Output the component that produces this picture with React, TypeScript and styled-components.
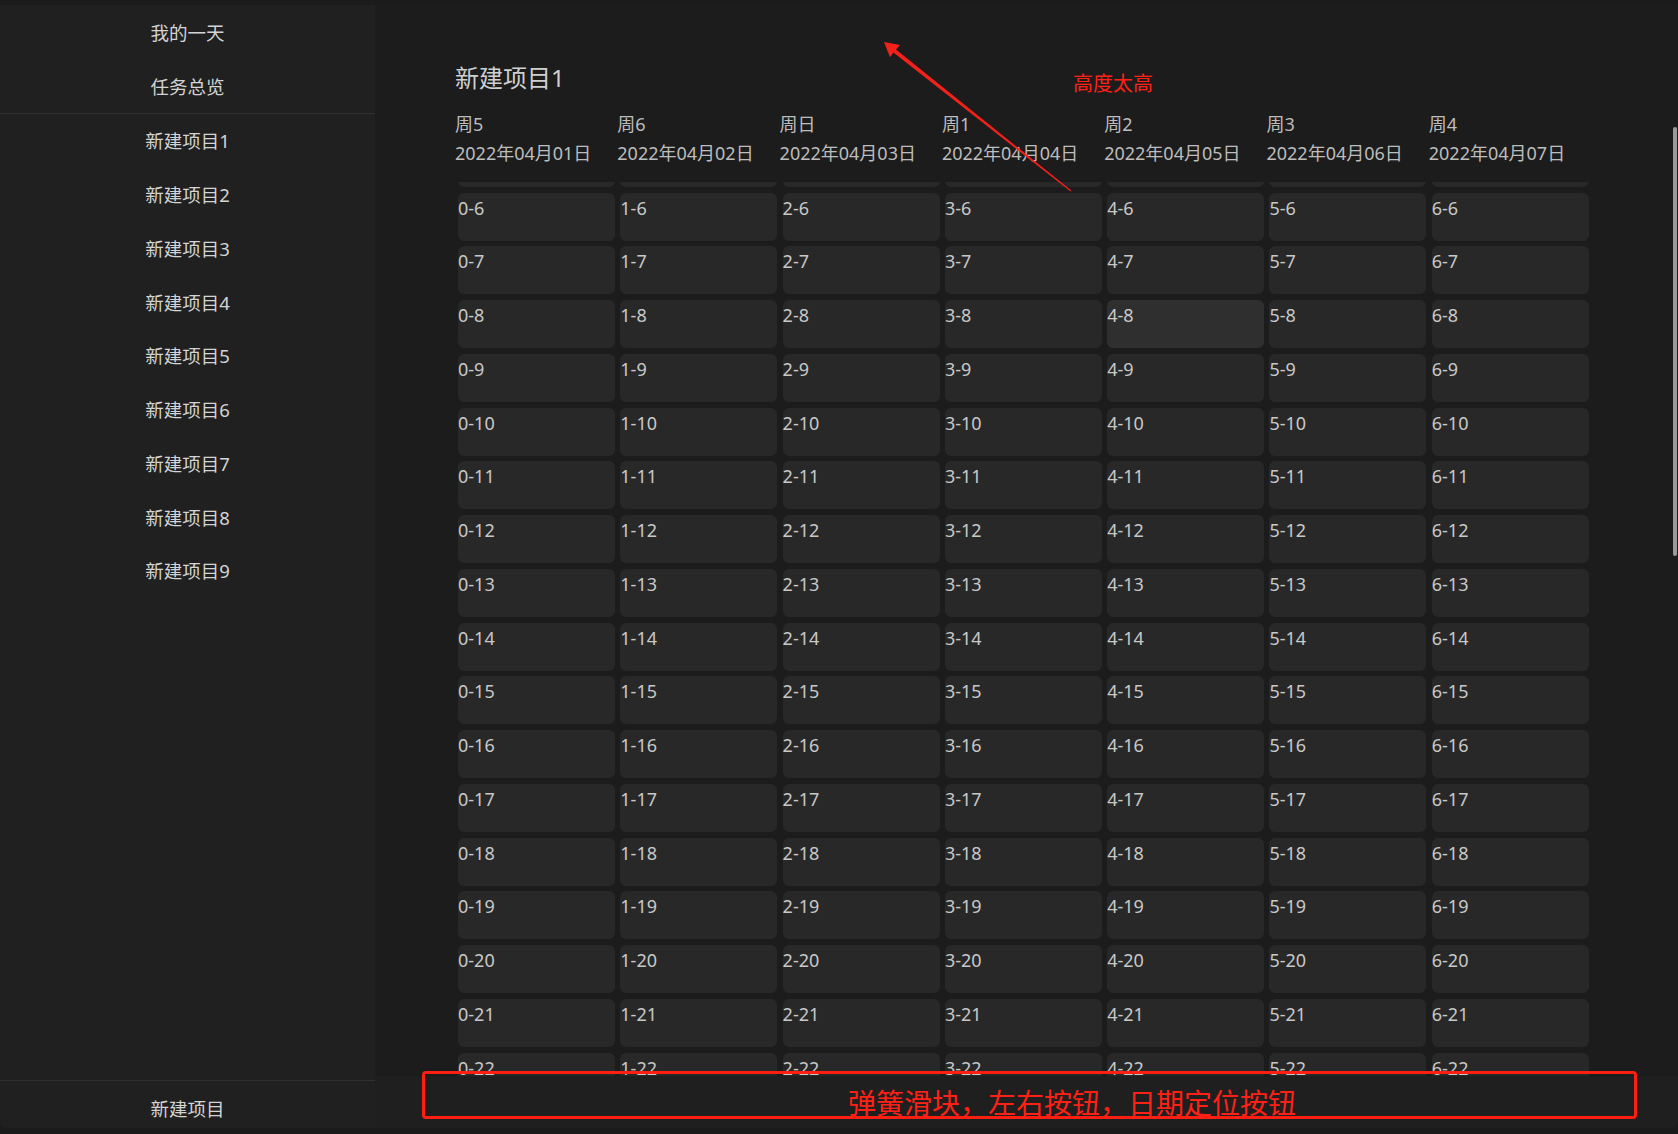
import React, { useLayoutEffect, useRef } from "react";
import styled, { createGlobalStyle } from "styled-components";

const FONT = `"Noto Sans", "Noto Sans CJK SC", sans-serif`;

const GlobalStyle = createGlobalStyle`
  html, body {
    margin: 0;
    height: 100%;
    overflow: hidden;
    background: #1b1b1b;
  }
  #root { height: 100%; }
  * { box-sizing: border-box; }
`;

const Shell = styled.div`
  display: flex;
  height: 100vh;
  padding: 5px 0 6px;
  font-family: ${FONT};
`;

const Sidebar = styled.nav`
  width: 375px;
  flex: none;
  background: #202020;
  display: flex;
  flex-direction: column;
  border-bottom-left-radius: 6px;
`;

const NavGroup = styled.div`
  display: flex;
  flex-direction: column;
`;

const NavItem = styled.div<{ $footer?: boolean }>`
  height: ${(p) => (p.$footer ? "47px" : "53.75px")};
  padding-top: ${(p) => (p.$footer ? "7px" : "0")};
  display: flex;
  align-items: center;
  justify-content: center;
  font-size: 18.5px;
  color: #d4d4d4;
  cursor: pointer;
`;

const Divider = styled.div`
  flex: none;
  height: 1px;
  background: #303030;
`;

const Spacer = styled.div`
  flex: 1;
`;

const Main = styled.main`
  flex: 1;
  min-width: 0;
  position: relative;
  display: flex;
  flex-direction: column;
  background: #1c1c1c;
  border-bottom-right-radius: 6px;
`;

const Content = styled.div`
  flex: 1;
  min-height: 0;
  display: flex;
  flex-direction: column;
  padding: 55px 0 0 83px;
`;

const Title = styled.h1`
  margin: 0 0 0 -3px;
  font-size: 24px;
  line-height: 36px;
  font-weight: 400;
  color: #d0d0d0;
`;

const Columns = `
  display: grid;
  grid-template-columns: repeat(7, 157px);
  column-gap: 5.3px;
`;

const HeaderRow = styled.div`
  ${Columns}
  margin: 13.5px 0 0 -3px;
`;

const DayHead = styled.div`
  display: flex;
  flex-direction: column;
  font-size: 18px;
  line-height: 29px;
  color: #bdbdbd;
  white-space: nowrap;
`;

const ScrollArea = styled.div`
  flex: 1;
  min-height: 0;
  margin-top: 14.5px;
  overflow-y: auto;
  scrollbar-width: none;
  &::-webkit-scrollbar { display: none; }
`;

const CellGrid = styled.div`
  ${Columns}
  row-gap: 5.75px;
  grid-auto-rows: 48px;
`;

const Cell = styled.div<{ $active?: boolean }>`
  background: ${(p) => (p.$active ? "#2f2f2f" : "#282828")};
  border-radius: 6px;
  font-size: 18px;
  line-height: 30px;
  color: #c8c8c8;
`;

const BottomBar = styled.div`
  flex: none;
  height: 52px;
  background: #1f1f1f;
  border-bottom-right-radius: 6px;
`;

const ScrollThumb = styled.div`
  position: absolute;
  right: 1px;
  top: 122px;
  width: 4px;
  height: 429px;
  border-radius: 2px;
  background: #9a9a9a;
`;

const ArrowMark = styled.svg`
  position: absolute;
  left: 500px;
  top: 30px;
  width: 205px;
  height: 165px;
  pointer-events: none;
`;

const NoteText = styled.div`
  position: absolute;
  left: 698px;
  top: 64px;
  font-family: "Noto Sans CJK SC", sans-serif;
  font-size: 20px;
  line-height: 28px;
  color: #ff2116;
  pointer-events: none;
`;

const NoteBox = styled.div`
  position: absolute;
  left: 47px;
  top: 1066px;
  width: 1215px;
  height: 48px;
  border: 3px solid #ff1e12;
  border-radius: 4px;
  padding: 14px 0 0 423px;
  font-family: "Noto Sans CJK SC", sans-serif;
  font-size: 28px;
  line-height: 28px;
  color: #ff2116;
  white-space: nowrap;
  pointer-events: none;
`;

const days = [
  { week: "周5", date: "2022年04月01日" },
  { week: "周6", date: "2022年04月02日" },
  { week: "周日", date: "2022年04月03日" },
  { week: "周1", date: "2022年04月04日" },
  { week: "周2", date: "2022年04月05日" },
  { week: "周3", date: "2022年04月06日" },
  { week: "周4", date: "2022年04月07日" },
];

const projects = Array.from({ length: 9 }, (_, i) => `新建项目${i + 1}`);
const hours = Array.from({ length: 24 }, (_, i) => i);

const ROW_PITCH = 53.75;

export default function App() {
  const scrollRef = useRef<HTMLDivElement>(null);

  useLayoutEffect(() => {
    if (scrollRef.current) {
      scrollRef.current.scrollTop = 6 * ROW_PITCH - 11;
    }
  }, []);

  return (
    <>
      <GlobalStyle />
      <Shell>
        <Sidebar>
          <NavGroup>
            <NavItem>我的一天</NavItem>
            <NavItem>任务总览</NavItem>
          </NavGroup>
          <Divider />
          <NavGroup>
            {projects.map((p) => (
              <NavItem key={p}>{p}</NavItem>
            ))}
          </NavGroup>
          <Spacer />
          <Divider />
          <NavItem $footer>新建项目</NavItem>
        </Sidebar>

        <Main>
          <Content>
            <Title>新建项目1</Title>
            <HeaderRow>
              {days.map((d) => (
                <DayHead key={d.date}>
                  <span>{d.week}</span>
                  <span>{d.date}</span>
                </DayHead>
              ))}
            </HeaderRow>
            <ScrollArea ref={scrollRef}>
              <CellGrid>
                {hours.map((h) =>
                  days.map((_, d) => (
                    <Cell key={`${d}-${h}`} $active={d === 4 && h === 8}>
                      {`${d}-${h}`}
                    </Cell>
                  ))
                )}
              </CellGrid>
            </ScrollArea>
          </Content>
          <BottomBar />

          <ScrollThumb />

          <ArrowMark viewBox="0 0 205 165">
            <polygon
              points="9,7 25,10 21,14.5 196.4,155.6 195.6,156.4 18.4,17.6 15,22.3"
              fill="#f4201a"
            />
          </ArrowMark>
          <NoteText>高度太高</NoteText>
          <NoteBox>弹簧滑块，左右按钮，日期定位按钮</NoteBox>
        </Main>
      </Shell>
    </>
  );
}
